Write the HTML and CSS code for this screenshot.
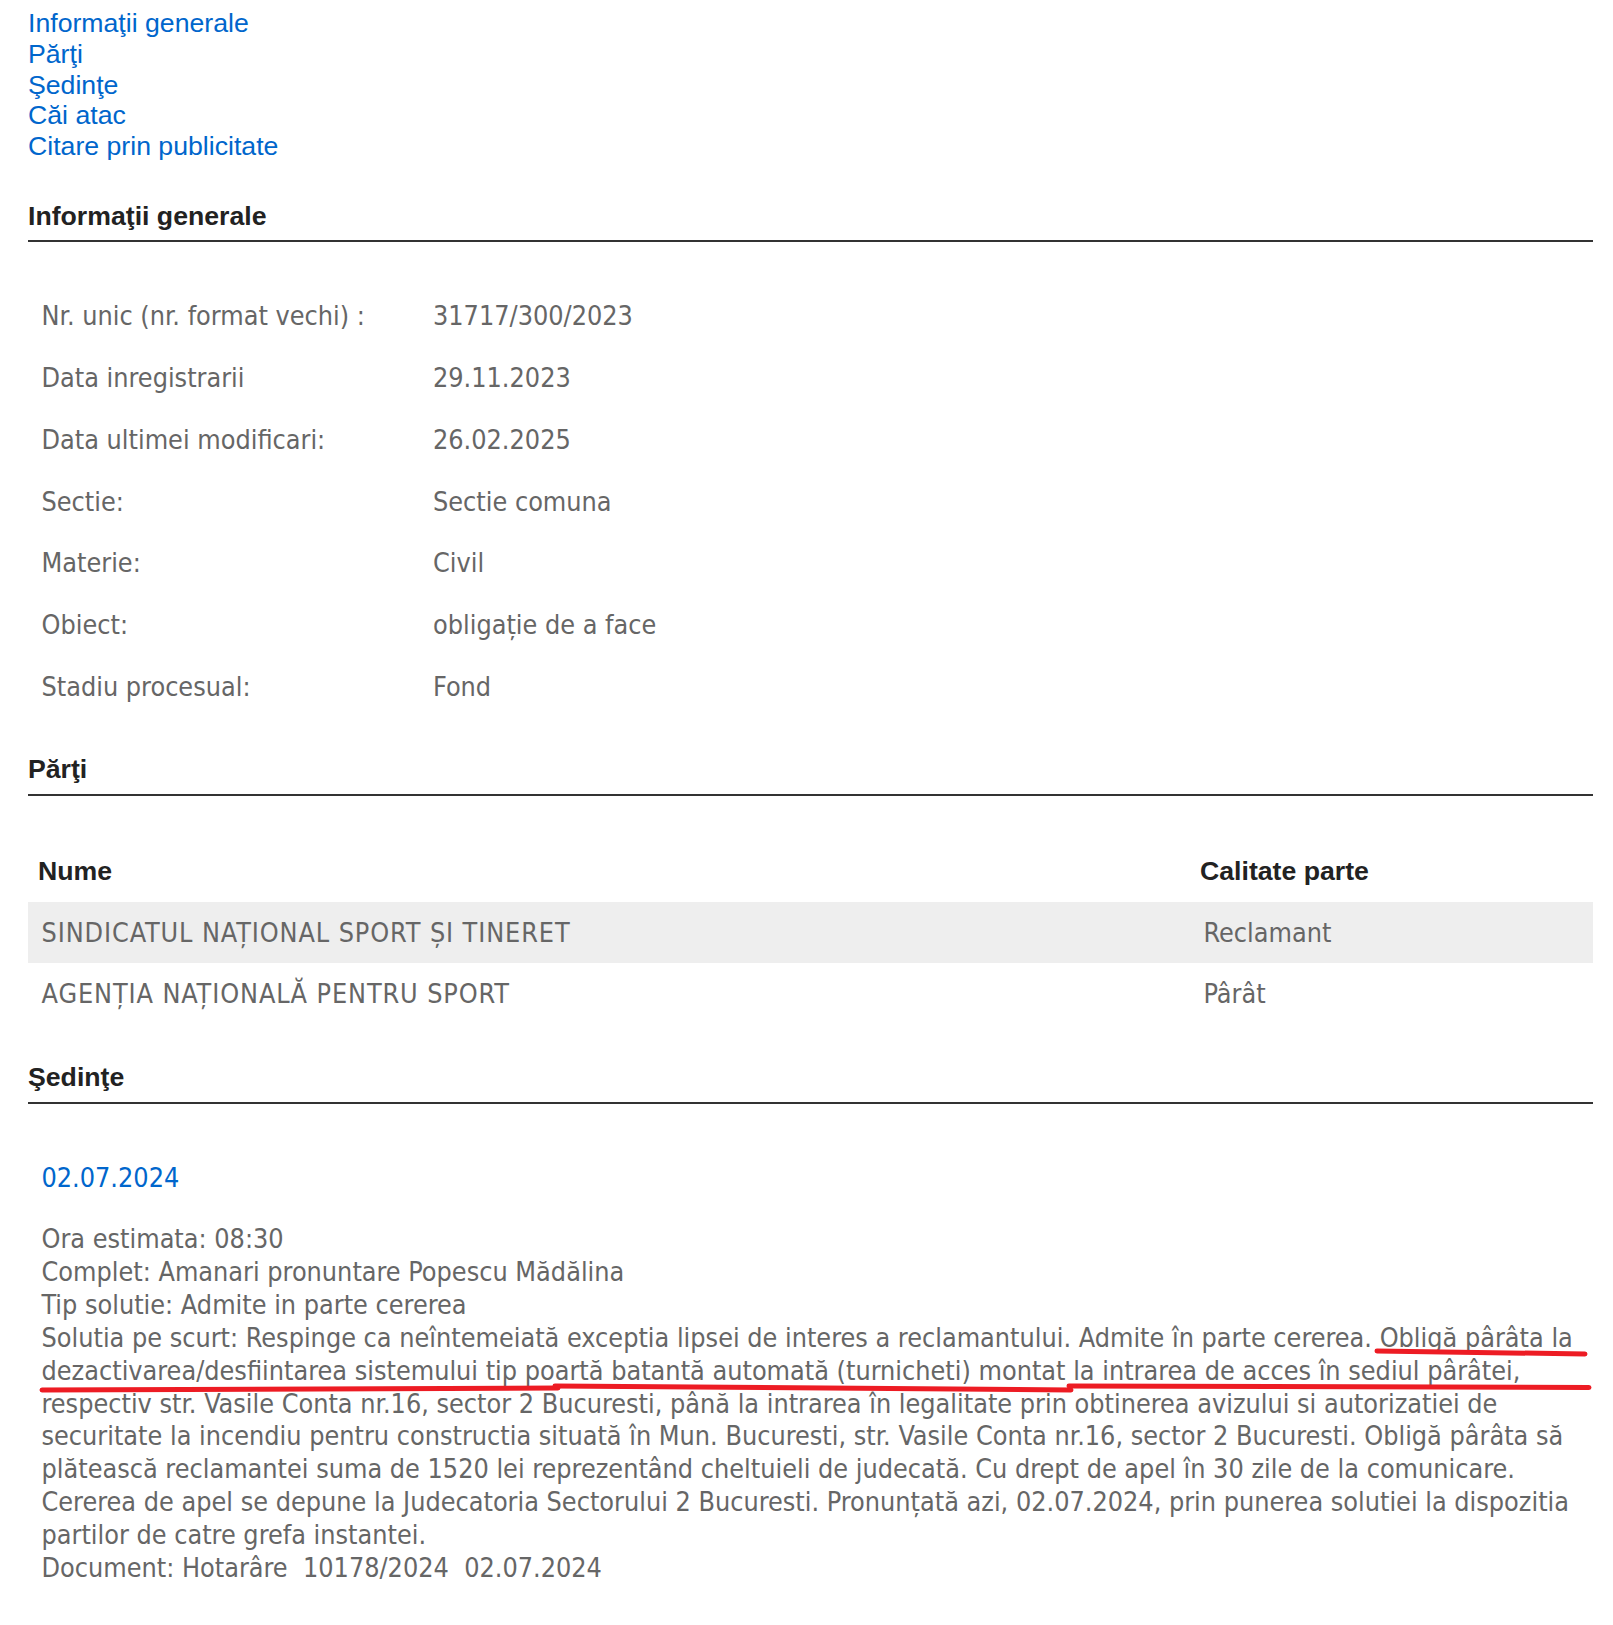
FILE: index.html
```html
<!DOCTYPE html>
<html lang="ro">
<head>
    <meta charset="UTF-8">
    <meta name="viewport" content="width=device-width, initial-scale=1.0">
    <title>Dosar 31717/300/2023</title>
    <link rel="stylesheet" href="styles.css">
</head>
<body>
    <div class="page">
        <ul class="nav">
            <li><a href="#info">Informaţii generale</a></li>
            <li><a href="#parti">Părţi</a></li>
            <li><a href="#sedinte">Şedinţe</a></li>
            <li><a href="#cai-atac">Căi atac</a></li>
            <li><a href="#citare">Citare prin publicitate</a></li>
        </ul>

        <h2 class="section-title" id="info">Informaţii generale</h2>
        <div class="info">
            <div class="info-row"><span>Nr. unic (nr. format vechi) :</span><span>31717/300/2023</span></div>
            <div class="info-row"><span>Data inregistrarii</span><span>29.11.2023</span></div>
            <div class="info-row"><span>Data ultimei modificari:</span><span>26.02.2025</span></div>
            <div class="info-row"><span>Sectie:</span><span>Sectie comuna</span></div>
            <div class="info-row"><span>Materie:</span><span>Civil</span></div>
            <div class="info-row"><span>Obiect:</span><span>obligație de a face</span></div>
            <div class="info-row"><span>Stadiu procesual:</span><span>Fond</span></div>
        </div>

        <h2 class="section-title" id="parti">Părţi</h2>
        <table class="parti">
            <thead>
                <tr><th class="col-nume">Nume</th><th>Calitate parte</th></tr>
            </thead>
            <tbody>
                <tr class="alt"><td class="nume">SINDICATUL NAȚIONAL SPORT ȘI TINERET</td><td>Reclamant</td></tr>
                <tr><td class="nume">AGENȚIA NAȚIONALĂ PENTRU SPORT</td><td>Pârât</td></tr>
            </tbody>
        </table>

        <h2 class="section-title" id="sedinte">Şedinţe</h2>
        <div class="sedinta">
            <div class="sedinta-date">02.07.2024</div>
            <div class="sedinta-body">
                Ora estimata: 08:30<br>
                Complet: Amanari pronuntare Popescu Mădălina<br>
                Tip solutie: Admite in parte cererea<br>
                Solutia pe scurt: Respinge ca neîntemeiată exceptia lipsei de interes a reclamantului. Admite în parte cererea. Obligă pârâta la dezactivarea/desfiintarea sistemului tip poartă batantă automată (turnicheti) montat la intrarea de acces în sediul pârâtei, respectiv str. Vasile Conta nr.16, sector 2 Bucuresti, până la intrarea în legalitate prin obtinerea avizului si autorizatiei de securitate la incendiu pentru constructia situată în Mun. Bucuresti, str. Vasile Conta nr.16, sector 2 Bucuresti. Obligă pârâta să plătească reclamantei suma de 1520 lei reprezentând cheltuieli de judecată. Cu drept de apel în 30 zile de la comunicare. Cererea de apel se depune la Judecatoria Sectorului 2 Bucuresti. Pronunțată azi, 02.07.2024, prin punerea solutiei la dispozitia partilor de catre grefa instantei.<br>
                Document: Hotarâre&nbsp; 10178/2024&nbsp; 02.07.2024
            </div>
        </div>
    </div>

    <!-- adnotari cu rosu peste text -->
    <svg class="markup" width="1613" height="1625" viewBox="0 0 1613 1625">
        <path d="M1377 1351 L1585 1354" />
        <path d="M42 1390 L558 1388" />
        <path d="M555 1386 L1071 1390" />
        <path d="M1069 1386 L1589 1387.5" />
    </svg>
</body>
</html>
```

FILE: styles.css
```css
body {
    margin: 0;
    font-family: "Liberation Sans", Arial, sans-serif;
    color: #333;
    background-color: #fff;
}

.page {
    padding: 8px 20px 40px 28px;
}

/* meniul de ancore de sus */
.nav {
    list-style: none;
    margin: 0;
    padding: 0;
    font-size: 26.67px;
    line-height: 30.8px;
}

.nav a {
    color: #0066cc;
    text-decoration: none;
}

.section-title {
    margin: 39px 0 0;
    padding-bottom: 8.5px;
    border-bottom: 2px solid #333;
    font-size: 26.67px;
    line-height: 31px;
    font-weight: bold;
    color: #222;
}

.info {
    margin-top: 43px;
    font-family: "DejaVu Sans Condensed", Tahoma, sans-serif;
    font-size: 26.75px;
    color: #666;
}

.info-row {
    display: grid;
    grid-template-columns: 391.5px 1fr;
    padding: 14px 13.5px;
    line-height: 33.7px;
}

.info + .section-title {
    margin-top: 37px;
}

.parti {
    width: 100%;
    margin-top: 45px;
    border-collapse: collapse;
    border-spacing: 0;
}

.parti th {
    height: 61px;
    padding: 0 10px;
    text-align: left;
    font-size: 26.67px;
    font-weight: bold;
    color: #222;
}

.parti th.col-nume {
    width: 1142px;
}

.parti td {
    height: 61px;
    padding: 0 13.5px;
    font-family: "DejaVu Sans Condensed", Tahoma, sans-serif;
    font-size: 26.75px;
    color: #666;
}

.parti td.nume {
    letter-spacing: 0.9px;
}

.parti tr.alt td {
    background-color: #eee;
}

.parti + .section-title {
    margin-top: 38.5px;
}

.sedinta {
    padding: 57px 13.5px 0;
    font-family: "DejaVu Sans Condensed", Tahoma, sans-serif;
    font-size: 26.75px;
    color: #666;
}

.sedinta-date {
    line-height: 33px;
    color: #0066cc;
}

.sedinta-body {
    margin-top: 29.3px;
    line-height: 32.86px;
}

.markup {
    position: absolute;
    top: 0;
    left: 0;
    pointer-events: none;
}

.markup path {
    fill: none;
    stroke: #ed1c24;
    stroke-width: 5;
    stroke-linecap: round;
}
```
